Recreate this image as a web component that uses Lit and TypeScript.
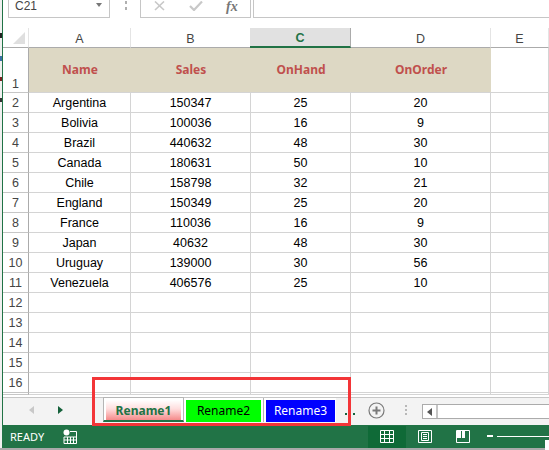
import { LitElement, html, css, svg } from "lit";
import { customElement } from "lit/decorators.js";

const DATA: [string, number, number, number][] = [
  ["Argentina", 150347, 25, 20],
  ["Bolivia", 100036, 16, 9],
  ["Brazil", 440632, 48, 30],
  ["Canada", 180631, 50, 10],
  ["Chile", 158798, 32, 21],
  ["England", 150349, 25, 20],
  ["France", 110036, 16, 9],
  ["Japan", 40632, 48, 30],
  ["Uruguay", 139000, 30, 56],
  ["Venezuela", 406576, 25, 10],
];
const EMPTY_ROWS = [12, 13, 14, 15, 16, 17];
const HEADS = ["Name", "Sales", "OnHand", "OnOrder"];
const COLS = ["A", "B", "C", "D", "E"];

@customElement("app-root")
export class AppRoot extends LitElement {
  static styles = css`
    :host {
      display: flex;
      flex-direction: column;
      width: 549px;
      height: 450px;
      overflow: hidden;
      position: relative;
      background: #a9a9a9;
      font-family: "Liberation Sans", Arial, sans-serif;
      font-size: 12px;
    }
    .screen { display: flex; height: 448px; flex: none; }
    .desk {
      width: 2px;
      flex: none;
      background: linear-gradient(to bottom,
        #f0f0f0 0 33px, #222 33px 38px, #f0f0f0 38px 56px, #3a6ea5 56px 61px,
        #f0f0f0 61px 77px, #7a2020 77px 81px, #f0f0f0 81px 98px, #333 98px 102px,
        #f0f0f0 102px 440px);
    }
    .window {
      flex: 1;
      min-width: 0;
      display: flex;
      flex-direction: column;
      border-left: 1px solid #217346;
      background: #fff;
    }
    .formula {
      height: 18px;
      flex: none;
      display: flex;
      margin-bottom: 10px;
    }
    .namebox {
      margin-left: 5px;
      border: solid #c6c6c6;
      border-width: 0 1px 1px 1px;
      display: flex;
      justify-content: space-between;
      padding: 0 7px 0 6px;
      box-sizing: content-box;
      width: 87px;
      color: #444;
      line-height: 12px;
    }
    .caret {
      width: 0;
      height: 0;
      margin-top: 3px;
      border: 3.5px solid transparent;
      border-top: 4px solid #777;
      border-bottom: 0;
    }
    .vdots {
      width: 3px;
      display: flex;
      flex-direction: column;
      gap: 3px;
    }
    .vdots i { display: block; width: 2px; height: 3px; background: #b0b0b0; }
    .formula .vdots { margin: 1px 12px 0 15px; }
    .fnbox {
      border: solid #c6c6c6;
      border-width: 0 1px 1px 1px;
      display: flex;
      align-items: flex-start;
      padding-left: 12px;
      box-sizing: content-box;
      width: 97px;
      gap: 23px;
    }
    .fnbox svg { flex: none; margin-top: 1px; }
    .fx {
      font-family: "Liberation Serif", serif;
      font-style: italic;
      font-weight: bold;
      font-size: 14px;
      color: #777;
      line-height: 14px;
    }
    .input {
      flex: 1;
      margin-left: 2px;
      border: solid #c6c6c6;
      border-width: 0 0 1px 1px;
    }
    .sheet {
      flex: none;
      height: 369px;
      overflow: hidden;
      display: grid;
      grid-template-columns: 26px 102px 120px 100px 140px 1fr;
      grid-template-rows: 20px 45px repeat(15, 20px);
      align-content: start;
    }
    .ch {
      display: flex;
      align-items: center;
      justify-content: center;
      color: #444;
      border-right: 1px solid #e4e4e4;
      border-bottom: 1px solid #ababab;
      box-sizing: border-box;
      padding-top: 2px;
      font-size: 12.5px;
    }
    .corner {
      display: flex;
      align-items: flex-end;
      justify-content: flex-end;
      padding: 0 3px 3px 0;
    }
    .corner svg { display: block; }
    .ch.sel {
      background: #e1e1e1;
      color: #217346;
      font-weight: bold;
      border-bottom: 2px solid #217346;
      border-right: 1px solid #ababab;
      margin-left: -1px;
    }
    .rh {
      display: flex;
      align-items: center;
      justify-content: center;
      color: #444;
      border-right: 1px solid #ababab;
      border-bottom: 1px solid #c6c6c6;
      box-sizing: border-box;
      font-size: 12.5px;
      padding-top: 1px;
    }
    .rh.tall { align-items: flex-end; padding: 0 0 1px; }
    .c {
      display: flex;
      align-items: center;
      justify-content: center;
      color: #000;
      border-right: 1px solid #d4d4d4;
      border-bottom: 1px solid #d4d4d4;
      box-sizing: border-box;
      font-size: 12.5px;
      padding-top: 1px;
    }
    .h {
      background: #ddd8c4;
      color: #c0504d;
      font-family: "Noto Sans", sans-serif;
      font-weight: bold;
      font-size: 12px;
      border-right: 0;
      padding: 0 0 1px;
    }
    .tabbar {
      height: 28px;
      flex: none;
      box-sizing: border-box;
      background: #f3f3f3;
      border-top: 1px solid #c6c6c6;
      display: flex;
      align-items: flex-start;
      font-family: "Noto Sans", sans-serif;
    }
    .nav {
      width: 100px;
      height: 27px;
      flex: none;
      display: flex;
      align-items: center;
      gap: 24px;
      padding: 0 0 3px 26px;
      box-sizing: border-box;
    }
    .arrow { width: 0; height: 0; border: 4px solid transparent; border-left: 0; border-right: 5px solid #c8c8c8; }
    .arrow.next { border-right: 0; border-left: 5px solid #14613a; }
    .tab {
      box-sizing: border-box;
      width: 80px;
      height: 24px;
      flex: none;
      background: #fff;
      padding: 2px 2px 0;
      border: solid #b5b5b5;
      border-width: 0 1px 0 0;
    }
    .tab span {
      box-sizing: border-box;
      display: flex;
      height: 22px;
      padding-bottom: 2px;
      align-items: center;
      justify-content: center;
    }
    .tab.active {
      width: 81px;
      margin-top: -1px;
      height: 25px;
      border-width: 1px 1px 2px 1px;
      border-color: #b5b5b5 #b5b5b5 #217346 #b5b5b5;
      padding: 2px 2px 0 2px;
    }
    .tab.active span {
      height: 20px;
      padding-bottom: 0;
      background: linear-gradient(to bottom, #fff 0%, #fdd 45%, #f58a8a 100%);
      color: #217346;
      font-weight: bold;
    }
    .tab.green span { background: #0f0; color: #000; }
    .tab.blue { width: 72px; border: 0; padding: 2px 0 0 2px; }
    .tab.blue span { background: #00f; color: #fff; width: 69px; }
    .more {
      display: flex;
      gap: 6px;
      margin: 15px 0 0 9px;
      flex: none;
    }
    .more i { width: 2px; height: 2px; background: #14613a; display: block; }
    .plus { margin: 4px 0 0 13px; flex: none; display: block; }
    .tabbar .vdots { margin: 7px 14px 0 20px; gap: 2px; flex: none; }
    .tabbar .vdots i { height: 2px; background: #b8b8b8; }
    .scroll {
      flex: 1;
      margin-top: 6px;
      height: 15px;
      display: flex;
      box-sizing: border-box;
      border: 1px solid #ababab;
      border-right: 0;
      background: #fff;
    }
    .sbtn {
      width: 15px;
      flex: none;
      border-right: 2px solid #c6c6c6;
      display: flex;
      align-items: center;
      justify-content: center;
      box-sizing: border-box;
    }
    .sbtn b { display: block; width: 0; height: 0; border: 4px solid transparent; border-left: 0; border-right: 5px solid #555; }
    .status {
      flex: none;
      height: 23px;
      background: #217346;
      display: flex;
      align-items: center;
      color: #fff;
      font-family: "Noto Sans", sans-serif;
      font-size: 11px;
    }
    .ready { margin-left: 7px; width: 53px; padding-bottom: 1px; }
    .views { margin-left: 291px; display: flex; align-items: stretch; align-self: stretch; padding-top: 1px; }
    .view { width: 38px; display: flex; align-items: center; justify-content: center; padding-bottom: 1px; }
    .view.on { background: #0f6a37; }
    .zoom { display: flex; align-items: center; flex: 1; margin-left: 5px; position: relative; padding-bottom: 1px; }
    .minus { width: 6px; height: 2px; background: #fff; margin-right: 4px; flex: none; }
    .track { flex: 1; height: 1px; background: #fff; }
    .knob { position: absolute; right: 0; top: 5px; width: 4px; height: 11px; background: #fff; }
    .callout {
      position: absolute;
      left: 92px;
      top: 377px;
      width: 259px;
      height: 49px;
      box-sizing: border-box;
      border: 3px solid #f33538;
      pointer-events: none;
    }
  `;

  render() {
    return html`
      <div class="screen">
        <div class="desk"></div>
        <div class="window">
          <div class="formula">
            <div class="namebox"><span>C21</span><i class="caret"></i></div>
            <div class="vdots"><i></i><i></i></div>
            <div class="fnbox">
              <svg width="13" height="10" viewBox="0 0 13 10" fill="none" stroke="#c8c8c8" stroke-width="1.6"><path d="M2 0.5 L11 9 M11 0.5 L2 9" /></svg>
              <svg width="14" height="10" viewBox="0 0 14 10" fill="none" stroke="#c8c8c8" stroke-width="2.2"><path d="M1 5 L5 9 L13 0.5" /></svg>
              <span class="fx">fx</span>
            </div>
            <div class="input"></div>
          </div>
          <div class="sheet">
            <div class="ch corner">
              <svg width="12" height="12" viewBox="0 0 12 12"><path d="M12 0 V12 H0 Z" fill="#dfdfdf" /></svg>
            </div>
            ${COLS.map((c) => html`<div class="ch ${c === "C" ? "sel" : ""}">${c}</div>`)}
            <div class="rh tall">1</div>
            ${HEADS.map((h) => html`<div class="c h">${h}</div>`)}
            <div class="c"></div>
            ${DATA.map(
              (r, i) => html`
                <div class="rh">${i + 2}</div>
                ${r.map((v) => html`<div class="c">${v}</div>`)}
                <div class="c"></div>
              `
            )}
            ${EMPTY_ROWS.map(
              (n) => html`
                <div class="rh">${n === 17 ? "" : n}</div>
                ${[0, 1, 2, 3, 4].map(() => html`<div class="c"></div>`)}
              `
            )}
          </div>
          <div class="tabbar">
            <div class="nav"><i class="arrow"></i><i class="arrow next"></i></div>
            <div class="tab active"><span>Rename1</span></div>
            <div class="tab green"><span>Rename2</span></div>
            <div class="tab blue"><span>Rename3</span></div>
            <div class="more"><i></i><i></i></div>
            <svg class="plus" width="17" height="17" viewBox="0 0 17 17" fill="none" stroke="#7a7a7a">
              <circle cx="8.5" cy="8.5" r="7.5" stroke-width="1.2" />
              <path d="M8.5 4.5 V12.5 M4.5 8.5 H12.5" stroke-width="2" />
            </svg>
            <div class="vdots"><i></i><i></i><i></i></div>
            <div class="scroll"><div class="sbtn"><b></b></div></div>
          </div>
          <div class="status">
            <span class="ready">READY</span>
            <svg width="14" height="15" viewBox="0 0 14 15" fill="none">
              <circle cx="3.5" cy="3.5" r="3" fill="#fff" />
              <path d="M7 2.5 H13.5 V14.5 H1 V8 H13 M1 11 H13 M4.5 8 V14.5 M7.5 8 V14.5 M10.5 8 V14.5" stroke="#fff" />
            </svg>
            <div class="views">
              <div class="view on">
                <svg width="14" height="13" viewBox="0 0 14 13" fill="none" stroke="#fff">${svg`<path d="M.5 .5 H13.5 V12.5 H.5 Z M.5 4.5 H13.5 M.5 8.5 H13.5 M4.5 .5 V12.5 M9.5 .5 V12.5" />`}</svg>
              </div>
              <div class="view">
                <svg width="14" height="13" viewBox="0 0 14 13" fill="none" stroke="#fff">${svg`<path d="M.5 .5 H13.5 V12.5 H.5 Z M3.5 2.5 H10.5 V10.5 H3.5 Z M5 4.5 H9 M5 6.5 H9 M5 8.5 H9" />`}</svg>
              </div>
              <div class="view">
                <svg width="14" height="13" viewBox="0 0 14 13" fill="none" stroke="#fff">${svg`<path d="M.5 .5 H13.5 V12.5 H.5 Z" /><path d="M1 1 H5 V8 H1 Z M6 1 H9 V8 H6 Z" fill="#fff" stroke="none" />`}</svg>
              </div>
            </div>
            <div class="zoom"><i class="minus"></i><i class="track"></i><i class="knob"></i></div>
          </div>
        </div>
      </div>
      <div class="callout"></div>
    `;
  }
}
